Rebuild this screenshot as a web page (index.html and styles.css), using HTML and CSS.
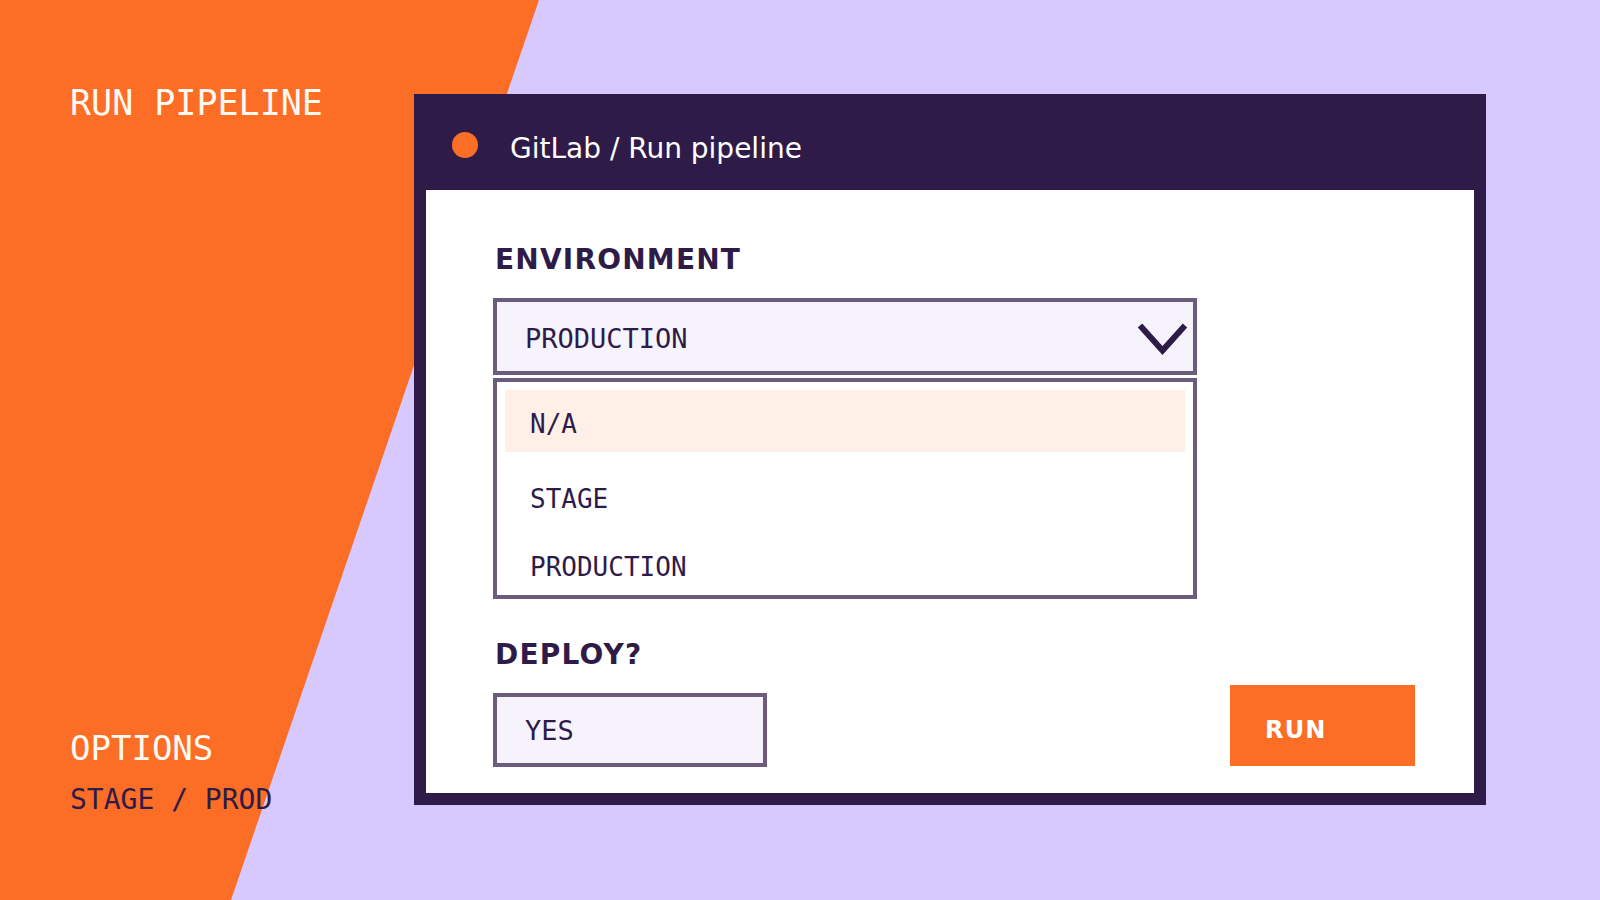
FILE: index.html
```html
<!DOCTYPE html>
<html lang="en">
<head>
<meta charset="utf-8">
<title>GitLab / Run pipeline</title>
<link rel="stylesheet" href="styles.css">
</head>
<body>
<div class="page">
  <div class="shape"></div>
  <aside class="side">
    <div class="side-title">RUN PIPELINE</div>
    <div class="side-foot">
      <div class="side-options">OPTIONS</div>
      <div class="side-values">STAGE / PROD</div>
    </div>
  </aside>
  <section class="window">
    <header class="titlebar">
      <span class="dot"></span>
      <span class="title">GitLab / Run pipeline</span>
    </header>
    <div class="panel">
      <div class="label">ENVIRONMENT</div>
      <div class="select">
        <span class="select-value">PRODUCTION</span>
        <svg class="chevron" width="54" height="36" viewBox="0 0 54 36" aria-hidden="true">
          <polyline points="4,5.5 26.5,30.5 49,5.5" fill="none" stroke="#2f1b48" stroke-width="6" stroke-linecap="butt" stroke-linejoin="miter"/>
        </svg>
      </div>
      <ul class="options">
        <li class="option active">N/A</li>
        <li class="option">STAGE</li>
        <li class="option">PRODUCTION</li>
      </ul>
      <div class="deploy-row">
        <div class="deploy">
          <div class="label">DEPLOY?</div>
          <div class="field">YES</div>
        </div>
        <button class="run" type="button">RUN</button>
      </div>
    </div>
  </section>
</div>
</body>
</html>
```

FILE: styles.css
```css
html, body {
  margin: 0;
  padding: 0;
}

body {
  font-family: "DejaVu Sans", sans-serif;
  background: #d7c9fd;
}

.page {
  position: relative;
  width: 1600px;
  height: 900px;
  overflow: hidden;
  display: flex;
  align-items: flex-start;
  background: #d7c9fd;
}

.shape {
  position: absolute;
  left: 0;
  top: 0;
  width: 100%;
  height: 100%;
  background: #fc6d26;
  clip-path: polygon(0 0, 539px 0, 231px 900px, 0 900px);
}

.side {
  position: relative;
  width: 414px;
  height: 900px;
  box-sizing: border-box;
  padding: 83px 0 84px 70px;
  display: flex;
  flex-direction: column;
  justify-content: space-between;
  font-family: "DejaVu Sans Mono", monospace;
  flex-shrink: 0;
}

.side-title {
  font-size: 35px;
  line-height: normal;
  color: #fffaf4;
}

.side-options {
  font-size: 34px;
  line-height: normal;
  color: #fffaf4;
  margin-bottom: 15px;
}

.side-values {
  font-size: 28px;
  line-height: normal;
  color: #2f1b48;
}

.window {
  position: relative;
  width: 1072px;
  height: 711px;
  margin-top: 94px;
  box-sizing: border-box;
  padding: 0 12px 12px;
  background: #2f1b48;
  display: flex;
  flex-direction: column;
  flex-shrink: 0;
}

.titlebar {
  height: 96px;
  flex-shrink: 0;
  box-sizing: border-box;
  padding: 38px 0 0 26px;
  display: flex;
  align-items: flex-start;
}

.dot {
  width: 26px;
  height: 26px;
  border-radius: 50%;
  background: #fc6d26;
  margin-right: 32px;
  flex-shrink: 0;
}

.title {
  font-size: 28px;
  line-height: normal;
  color: #ffffff;
}

.panel {
  flex: 1;
  background: #ffffff;
  padding: 53px 59px 0 67px;
}

.label {
  font-weight: bold;
  font-size: 28px;
  line-height: normal;
  letter-spacing: 1.2px;
  color: #2f1b48;
  padding-left: 2px;
  margin-bottom: 22px;
}

.select {
  width: 704px;
  height: 77px;
  box-sizing: border-box;
  border: 4px solid #6c5b7b;
  background: #f6f3fc;
  display: flex;
  align-items: center;
  justify-content: space-between;
  padding: 0 3px 0 28px;
}

.select-value {
  font-family: "DejaVu Sans Mono", monospace;
  font-size: 27px;
  line-height: normal;
  color: #2f1b48;
  padding-top: 4px;
}

.chevron {
  display: block;
  margin-top: 3px;
}

.options {
  list-style: none;
  margin: 3px 0 0;
  width: 704px;
  height: 221px;
  box-sizing: border-box;
  border: 4px solid #6c5b7b;
  background: #ffffff;
  padding: 8px 8px 0;
}

.option {
  height: 62px;
  box-sizing: border-box;
  padding: 19px 0 0 25px;
  font-family: "DejaVu Sans Mono", monospace;
  font-size: 26px;
  line-height: normal;
  color: #2f1b48;
}

.option.active {
  background: #ffefe7;
}

.option:nth-child(2) {
  margin-top: 13px;
}

.option:nth-child(3) {
  margin-top: 6px;
}

.deploy-row {
  margin-top: 39px;
  display: flex;
  justify-content: space-between;
  align-items: flex-end;
}

.field {
  width: 274px;
  height: 74px;
  box-sizing: border-box;
  border: 4px solid #6c5b7b;
  background: #f6f3fc;
  display: flex;
  align-items: center;
  padding-left: 28px;
  font-family: "DejaVu Sans Mono", monospace;
  font-size: 27px;
  line-height: normal;
  color: #2f1b48;
}

.run {
  width: 185px;
  height: 81px;
  box-sizing: border-box;
  margin: 0 0 1px;
  border: none;
  background: #fc6d26;
  color: #ffffff;
  font-family: "DejaVu Sans", sans-serif;
  font-weight: bold;
  font-size: 24px;
  line-height: normal;
  letter-spacing: 0.05em;
  display: flex;
  align-items: flex-start;
  padding: 31px 0 0 35px;
  text-align: left;
}
```
